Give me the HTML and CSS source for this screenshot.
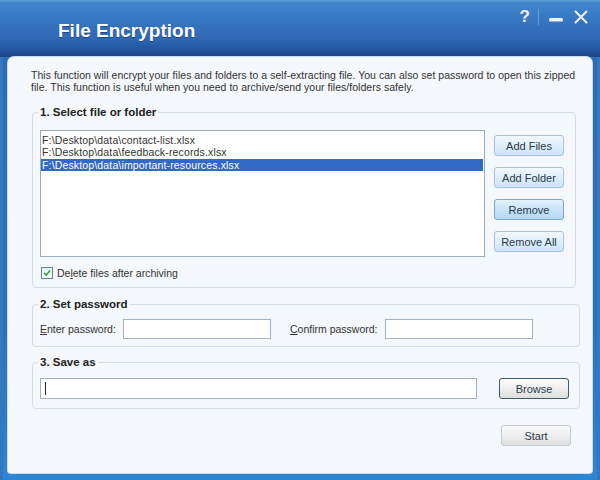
FILE: index.html
```html
<!DOCTYPE html>
<html lang="en">
<head>
    <meta charset="UTF-8">
    <meta name="viewport" content="width=device-width, initial-scale=1.0">
    <title>File Encryption</title>
    <link rel="stylesheet" href="styles.css">
</head>
<body>
    <div class="window">
        <header class="titlebar">
            <h1 class="title">File Encryption</h1>
            <div class="caption-btns">
                <span class="cap-help">?</span>
                <span class="cap-sep"></span>
                <svg class="cap-min" width="16" height="6" viewBox="0 0 16 6"><rect x="1" y="1" width="14" height="3.5" rx="1.5" fill="#eef3f9"/></svg>
                <svg class="cap-close" width="16" height="16" viewBox="0 0 16 16"><path d="M2.5 2.5 L13.5 13.5 M13.5 2.5 L2.5 13.5" stroke="#eef3f9" stroke-width="2" stroke-linecap="round"/></svg>
            </div>
        </header>

        <main class="panel">
            <p class="intro">This function will encrypt your files and folders to a self-extracting file. You can also set password to open this zipped file. This function is useful when you need to archive/send your files/folders safely.</p>

            <fieldset class="group group-files">
                <legend>1. Select file or folder</legend>
                <div class="files-row">
                    <ul class="file-list">
                        <li>F:\Desktop\data\contact-list.xlsx</li>
                        <li>F:\Desktop\data\feedback-records.xlsx</li>
                        <li class="selected">F:\Desktop\data\important-resources.xlsx</li>
                    </ul>
                    <div class="file-btns">
                        <button class="btn btn-blue">Add Files</button>
                        <button class="btn btn-blue">Add Folder</button>
                        <button class="btn btn-blue btn-focus">Remove</button>
                        <button class="btn btn-blue">Remove All</button>
                    </div>
                </div>
                <label class="check">
                    <span class="checkbox">
                        <svg width="12" height="12" viewBox="0 0 12 12"><path d="M2.5 6 L5 8.6 L9.6 3" fill="none" stroke="#2f9a2c" stroke-width="1.8"/></svg>
                    </span>
                    De<u>l</u>ete files after archiving
                </label>
            </fieldset>

            <fieldset class="group group-pass">
                <legend>2. Set password</legend>
                <div class="pass-row">
                    <label class="field-label label-enter"><u>E</u>nter password:</label>
                    <input class="text-input pass-input" type="text">
                    <label class="field-label label-confirm"><u>C</u>onfirm password:</label>
                    <input class="text-input pass-input" type="text">
                </div>
            </fieldset>

            <fieldset class="group group-save">
                <legend>3. Save as</legend>
                <div class="save-row">
                    <div class="text-input save-input"><span class="caret"></span></div>
                    <button class="btn btn-gray btn-default">Browse</button>
                </div>
            </fieldset>

            <div class="actions">
                <button class="btn btn-gray">Start</button>
            </div>
        </main>
    </div>
</body>
</html>
```

FILE: styles.css
```css
body, html {
    margin: 0;
    height: 100%;
    overflow: hidden;
    font-family: "Liberation Sans", Arial, sans-serif;
}
.window {
    width: 600px;
    height: 480px;
    display: flex;
    flex-direction: column;
    background: linear-gradient(to bottom, #2c6cb4 0%, #2b72bd 70%, #2d86d4 100%);
    box-shadow: inset 3px 0 0 #3478c0, inset -3px 0 0 #3478c0;
}
.titlebar {
    height: 57px;
    flex: none;
    display: flex;
    align-items: center;
    justify-content: space-between;
    background: linear-gradient(to bottom, #5c9fd9 0px, #3f87cc 3px, #3778c2 18px, #3169b5 38px, #2658a3 48px, #1c4689 57px);
}
.title {
    margin: 5px 0 0 58px;
    font-size: 19px;
    font-weight: bold;
    color: #fff;
    text-shadow: 0 1px 1px rgba(0, 30, 80, 0.5);
}
.caption-btns {
    display: flex;
    align-items: center;
    align-self: flex-start;
    margin-top: 7px;
    margin-right: 11px;
}
.cap-help {
    font-size: 17px;
    font-weight: bold;
    color: #eef3f9;
    margin-right: 8px;
}
.cap-sep {
    width: 1px;
    height: 16px;
    background: #6b9dd2;
    margin-right: 9px;
}
.cap-min {
    margin-top: 5px;
    margin-right: 9px;
}
.panel {
    flex: none;
    height: 416px;
    margin: 0 8px;
    box-sizing: border-box;
    padding: 12px 0 0 24px;
    background: #f4f7fb;
    border-radius: 6px 6px 3px 3px;
    box-shadow: 0 0 0 1px #c9dcef;
}
.intro {
    margin: 0 0 0 -1px;
    width: 552px;
    font-size: 10.5px;
    line-height: 12px;
    letter-spacing: 0.03px;
    color: #333;
}
.group {
    box-sizing: border-box;
    margin: 0;
    border: 1px solid #d6dde5;
    border-radius: 4px;
    min-width: 0;
}
.group legend {
    padding: 0 2px;
    margin-left: -2px;
    font-size: 11.5px;
    line-height: 14px;
    font-weight: bold;
    color: #222;
}
.group-files {
    width: 544px;
    margin-top: 12px;
    padding: 11px 10px 8px 7px;
}
.group-pass {
    width: 548px;
    margin-top: 9px;
    padding: 8px 7px 7px 7px;
}
.group-save {
    width: 548px;
    margin-top: 8px;
    padding: 9px 10px 9px 7px;
}
.files-row {
    display: flex;
    gap: 9px;
}
.file-list {
    list-style: none;
    margin: 0;
    padding: 3px 1px 0 0;
    width: 445px;
    height: 127px;
    box-sizing: border-box;
    border: 1px solid #9aaabb;
    background: #fff;
    font-size: 10.5px;
    letter-spacing: 0.15px;
    color: #333;
}
.file-list li {
    line-height: 12.3px;
    padding-left: 1px;
    white-space: nowrap;
}
.file-list li.selected {
    background: #3169c6;
    color: #fff;
}
.file-btns {
    display: flex;
    flex-direction: column;
    gap: 11px;
    padding-top: 5px;
}
.btn {
    width: 70px;
    height: 21px;
    padding: 0;
    margin: 0;
    box-sizing: border-box;
    border-radius: 3px;
    font-family: "Liberation Sans", Arial, sans-serif;
    font-size: 11px;
    color: #2b3a4c;
    cursor: pointer;
}
.btn-blue {
    border: 1px solid #a7c3db;
    background: linear-gradient(to bottom, #f2f8fd 0%, #deeefa 50%, #cde5f7 100%);
}
.btn-focus {
    border-color: #7ea6c8;
    background: linear-gradient(to bottom, #e4f2fc 0%, #c6e3f8 50%, #b3d9f4 100%);
}
.btn-gray {
    border: 1px solid #c4cad0;
    background: linear-gradient(to bottom, #fbfbfb 0%, #eeeeee 50%, #dedede 100%);
}
.btn-default {
    border-color: #3d5a75;
}
.check {
    display: flex;
    align-items: center;
    margin-top: 10px;
    height: 12px;
    font-size: 10.5px;
    color: #333;
}
.checkbox {
    width: 10px;
    height: 10px;
    margin-left: 1px;
    margin-right: 4px;
    border: 1px solid #5f86a8;
    background: linear-gradient(to bottom, #e8eef3, #ffffff);
    display: flex;
    align-items: center;
    justify-content: center;
    overflow: hidden;
}
.pass-row {
    display: flex;
    align-items: center;
}
.field-label {
    font-size: 10.5px;
    color: #333;
}
.label-enter {
    width: 83px;
}
.label-confirm {
    margin-left: 19px;
    width: 95px;
}
.text-input {
    box-sizing: border-box;
    margin: 0;
    border: 1px solid #a3b3c3;
    background: #fff;
}
.pass-input {
    width: 148px;
    height: 20px;
}
.save-row {
    display: flex;
    align-items: center;
    gap: 22px;
}
.save-input {
    width: 438px;
    height: 21px;
    display: flex;
    align-items: center;
    padding-left: 4px;
}
.caret {
    width: 1px;
    height: 13px;
    background: #222;
}
.actions {
    display: flex;
    justify-content: flex-end;
    margin-top: 16px;
    width: 539px;
}
```
